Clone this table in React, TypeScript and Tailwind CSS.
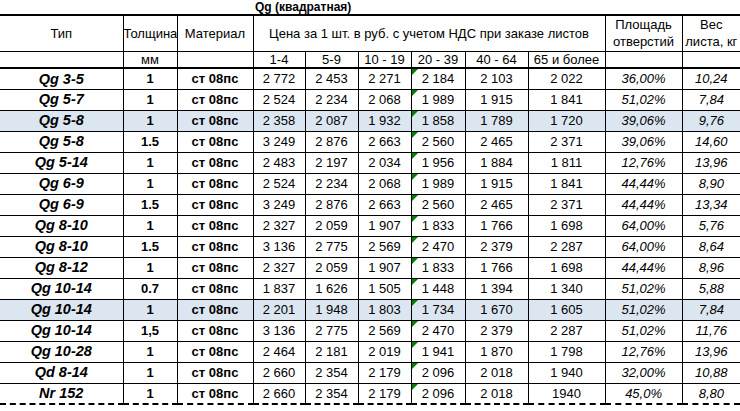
import React from "react";

type Row = {
  type: string;
  thick: string;
  prices: string[];
  area: string;
  weight: string;
  hl?: boolean;
};

const ROWS: Row[] = [
  { type: "Qg 3-5", thick: "1", prices: ["2 772", "2 453", "2 271", "2 184", "2 103", "2 022"], area: "36,00%", weight: "10,24" },
  { type: "Qg 5-7", thick: "1", prices: ["2 524", "2 234", "2 068", "1 989", "1 915", "1 841"], area: "51,02%", weight: "7,84" },
  { type: "Qg 5-8", thick: "1", prices: ["2 358", "2 087", "1 932", "1 858", "1 789", "1 720"], area: "39,06%", weight: "9,76", hl: true },
  { type: "Qg 5-8", thick: "1.5", prices: ["3 249", "2 876", "2 663", "2 560", "2 465", "2 371"], area: "39,06%", weight: "14,60" },
  { type: "Qg 5-14", thick: "1", prices: ["2 483", "2 197", "2 034", "1 956", "1 884", "1 811"], area: "12,76%", weight: "13,96" },
  { type: "Qg 6-9", thick: "1", prices: ["2 524", "2 234", "2 068", "1 989", "1 915", "1 841"], area: "44,44%", weight: "8,90" },
  { type: "Qg 6-9", thick: "1.5", prices: ["3 249", "2 876", "2 663", "2 560", "2 465", "2 371"], area: "44,44%", weight: "13,34" },
  { type: "Qg 8-10", thick: "1", prices: ["2 327", "2 059", "1 907", "1 833", "1 766", "1 698"], area: "64,00%", weight: "5,76" },
  { type: "Qg 8-10", thick: "1.5", prices: ["3 136", "2 775", "2 569", "2 470", "2 379", "2 287"], area: "64,00%", weight: "8,64" },
  { type: "Qg 8-12", thick: "1", prices: ["2 327", "2 059", "1 907", "1 833", "1 766", "1 698"], area: "44,44%", weight: "8,96" },
  { type: "Qg 10-14", thick: "0.7", prices: ["1 837", "1 626", "1 505", "1 448", "1 394", "1 340"], area: "51,02%", weight: "5,88" },
  { type: "Qg 10-14", thick: "1", prices: ["2 201", "1 948", "1 803", "1 734", "1 670", "1 605"], area: "51,02%", weight: "7,84", hl: true },
  { type: "Qg 10-14", thick: "1,5", prices: ["3 136", "2 775", "2 569", "2 470", "2 379", "2 287"], area: "51,02%", weight: "11,76" },
  { type: "Qg 10-28", thick: "1", prices: ["2 464", "2 181", "2 019", "1 941", "1 870", "1 798"], area: "12,76%", weight: "13,96" },
  { type: "Qd 8-14", thick: "1", prices: ["2 660", "2 354", "2 179", "2 096", "2 018", "1 940"], area: "32,00%", weight: "10,88" },
  { type: "Nr 152", thick: "1", prices: ["2 660", "2 354", "2 179", "2 096", "2 018", "1940"], area: "45,0%", weight: "8,80" },
];

const WIDTHS = [123, 54, 76, 52, 53, 53, 54, 63, 77, 77, 58];
const QTY = ["1-4", "5-9", "10 - 19", "20 - 39", "40 - 64", "65 и более"];

const cell = "border border-black p-0 text-center align-middle whitespace-nowrap";

export default function App() {
  return (
    <div className="w-[740px] h-[411px] overflow-hidden bg-white font-['Liberation_Sans',Arial,sans-serif] text-[13px] leading-none text-black">
      <table className="table-fixed border-collapse w-[740px]">
        <colgroup>
          {WIDTHS.map((w, i) => (
            <col key={i} style={{ width: w }} />
          ))}
        </colgroup>
        <tbody>
          {/* title row */}
          <tr className="h-[15px] border-b-2 border-black">
            <td colSpan={3} className="p-0" />
            <td colSpan={6} className="p-0 pl-[2px] text-left align-middle font-bold text-[12px]">
              Qg (квадратная)
            </td>
            <td colSpan={2} className="p-0" />
          </tr>

          {/* header */}
          <tr className="h-[36px]">
            <td className={`${cell} border-l-0`}>Тип</td>
            <td className={cell}>Толщина</td>
            <td className={cell}>Материал</td>
            <td colSpan={6} className={cell}>
              Цена за 1 шт. в руб. с учетом НДС при заказе листов
            </td>
            <td className={`${cell} leading-[17px]`}>
              Площадь
              <br />
              отверстий
            </td>
            <td className={`${cell} border-r-0 leading-[17px]`}>
              Вес
              <br />
              листа, кг
            </td>
          </tr>

          {/* sub header */}
          <tr className="h-[17px] border-b-2 border-black">
            <td className={`${cell} border-l-0`} />
            <td className={cell}>мм</td>
            <td className={cell} />
            {QTY.map((q) => (
              <td key={q} className={cell}>
                {q}
              </td>
            ))}
            <td className={cell} />
            <td className={`${cell} border-r-0`} />
          </tr>

          {ROWS.map((r, i) => (
            <tr
              key={i}
              className={`h-[21px] ${r.hl ? "bg-[#dce6f1]" : ""} ${
                i === ROWS.length - 1 ? "border-b-2 border-dashed border-black" : ""
              }`}
            >
              <td className={`${cell} border-l-0 font-bold italic text-[14.5px]`}>{r.type}</td>
              <td className={`${cell} font-bold`}>{r.thick}</td>
              <td className={`${cell} font-bold`}>ст 08пс</td>
              {r.prices.map((p, j) => (
                <td key={j} className={`${cell} ${j === 3 ? "relative" : ""}`}>
                  {j === 3 && (
                    <span className="absolute left-0 top-0 w-0 h-0 border-t-[6px] border-r-[6px] border-t-[#008000] border-r-transparent" />
                  )}
                  {p}
                </td>
              ))}
              <td className={`${cell} italic`}>{r.area}</td>
              <td className={`${cell} border-r-0 italic`}>{r.weight}</td>
            </tr>
          ))}
        </tbody>
      </table>
    </div>
  );
}
